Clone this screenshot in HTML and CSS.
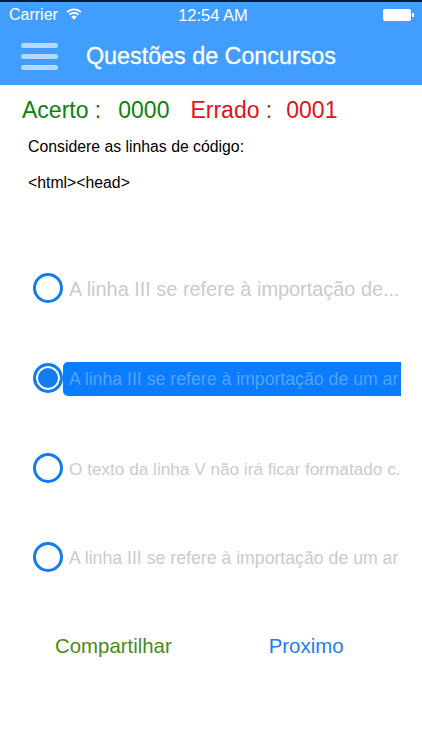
FILE: index.html
```html
<!DOCTYPE html>
<html lang="pt">
<head>
<meta charset="utf-8">
<title>Questões de Concursos</title>
<link rel="stylesheet" href="styles.css">
</head>
<body>
<div class="screen">
  <header class="top">
    <div class="status">
      <div class="status-left">
        <span>Carrier</span>
        <svg class="wifi" viewBox="0 0 16 12" width="16" height="12"><path d="M8 11.8 5.3 8.8a3.8 3.8 0 0 1 5.4 0Z" fill="#fff"/><path d="M3.4 6.7a6.6 6.6 0 0 1 9.2 0M1 4.2a10 10 0 0 1 14 0" fill="none" stroke="#fff" stroke-width="1.7"/></svg>
      </div>
      <div class="clock">12:54 AM</div>
      <div class="status-right">
        <span class="battery"></span><span class="battery-tip"></span>
      </div>
    </div>
    <div class="nav">
      <div class="burger"><i></i><i></i><i></i></div>
      <div class="title">Questões de Concursos</div>
    </div>
  </header>
  <div class="score">
    <span class="ok">Acerto :</span><span class="ok n1">0000</span>
    <span class="bad l2">Errado :</span><span class="bad n2">0001</span>
  </div>
  <div class="question">
    <p>Considere as linhas de código:</p>
    <p>&lt;html&gt;&lt;head&gt;</p>
  </div>
  <div class="options">
    <div class="option"><span class="radio"></span><span class="label">A linha III se refere à importação de...</span></div>
    <div class="option selected"><span class="radio"></span><span class="label fit">A linha III se refere à importação de um ar</span></div>
    <div class="option"><span class="radio"></span><span class="label fit-long">O texto da linha V não irá ficar formatado c.</span></div>
    <div class="option"><span class="radio"></span><span class="label fit">A linha III se refere à importação de um ar</span></div>
  </div>
  <div class="actions">
    <span class="share">Compartilhar</span>
    <span class="next">Proximo</span>
  </div>
</div>
</body>
</html>
```
FILE: styles.css
```css
* { box-sizing: border-box; }
html, body { margin: 0; padding: 0; }
body { width: 422px; height: 750px; overflow: hidden; background: #fff; font-family: "Liberation Sans", Arial, sans-serif; }
.screen { width: 422px; height: 750px; display: flex; flex-direction: column; }
.top { height: 85px; background: #429efe; border-top: 2px solid #0a1a2c; color: #fff; flex: none; }
.status { height: 25px; display: grid; grid-template-columns: 1fr auto 1fr; align-items: center; padding: 1px 5px 0 9px; font-size: 16px; }
.status-left { display: flex; align-items: center; gap: 8px; }
.wifi { display: block; margin-top: -3px; }
.clock { font-size: 16.5px; }
.status-right { display: flex; justify-content: flex-end; align-items: center; padding-right: 3px; margin-top: -1px; }
.battery { width: 28px; height: 12px; background: #fff; border-radius: 2px; }
.battery-tip { width: 2px; height: 4px; background: #fff; margin-left: 1px; }
.nav { display: flex; align-items: center; padding: 6px 0 0 21px; height: 52px; }
.burger { width: 37px; display: flex; flex-direction: column; gap: 6px; }
.burger i { display: block; height: 5px; border-radius: 3px; background: #b5d8fe; }
.title { margin-left: 28px; font-size: 23.3px; white-space: nowrap; -webkit-text-stroke: 0.3px #fff; }
.score { display: flex; padding: 12px 0 0 22px; height: 42px; font-size: 23px; line-height: 27px; white-space: nowrap; }
.ok { color: #0d800d; }
.bad { color: #e0121a; }
.n1 { margin-left: 17px; }
.l2 { margin-left: 21px; }
.n2 { margin-left: 14px; }
.question { padding-left: 28px; font-size: 15.8px; color: #000; height: 146px; padding-top: 11px; }
.question p { margin: 0 0 18px; line-height: 18px; }
.options { display: flex; flex-direction: column; gap: 59.8px; padding-left: 33px; }
.option { display: flex; align-items: center; height: 30px; }
.radio { width: 30px; height: 30px; border-radius: 50%; border: 3px solid #127cf0; flex: none; position: relative; z-index: 1; background: #fff; }
.label { width: 338px; margin-top: 2px; padding-left: 6px; font-size: 19.9px; color: #cbcbcb; white-space: nowrap; overflow: hidden; height: 34px; line-height: 34px; }
.label.fit { font-size: 17.7px; }
.label.fit-long { font-size: 17.2px; }
.selected .radio { background: #127cf0; box-shadow: inset 0 0 0 2px #fff; }
.selected .label { background: #0a7cff; color: #55a3f8; border-radius: 5px 0 0 5px; }
.actions { display: flex; padding: 62px 0 0 55px; font-size: 20.4px; line-height: 24px; }
.share { color: #4a8a1c; }
.next { color: #1b7ef0; margin-left: 97px; }
```
